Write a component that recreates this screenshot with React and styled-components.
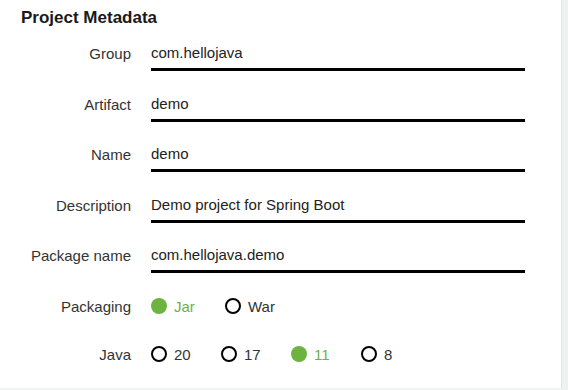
import React, { useState } from 'react'
import styled, { createGlobalStyle } from 'styled-components'

const GlobalStyle = createGlobalStyle`
  body {
    margin: 0;
    background: #eef3f2;
    font-family: 'Liberation Sans', Arial, sans-serif;
  }
`

const Panel = styled.div`
  width: 562px;
  height: 388px;
  background: #fff;
  border-right: 1px solid #dfe6e6;
  box-sizing: border-box;
  padding: 8px 0 0 21px;
`

const Title = styled.div`
  font-size: 17px;
  font-weight: bold;
  color: #1a1a1a;
  height: 20px;
  line-height: 20px;
`

const Form = styled.div`
  display: flex;
  flex-direction: column;
  margin-top: 9px;
`

const Row = styled.div`
  display: grid;
  grid-template-columns: 110px 1fr;
  column-gap: 20px;
  align-items: center;
  height: ${(p) => p.h || 50.5}px;
`

const Label = styled.label`
  text-align: right;
  font-size: 15px;
  color: #333;
  align-self: ${(p) => (p.top ? 'start' : 'center')};
  padding-top: ${(p) => (p.top ? '8px' : '0')};
`

const Input = styled.input`
  width: 374px;
  height: 34px;
  box-sizing: border-box;
  border: none;
  border-bottom: 3px solid #000;
  outline: none;
  padding: 0;
  font-family: inherit;
  font-size: 15px;
  color: #222;
  background: transparent;
  align-self: start;
`

const Radios = styled.div`
  display: flex;
  align-items: center;
`

const Radio = styled.div`
  display: flex;
  align-items: center;
  width: ${(p) => p.w}px;
  font-size: 15px;
  color: ${(p) => (p.on ? '#6db33f' : '#333')};
  cursor: pointer;
`

const Dot = styled.span`
  width: 16px;
  height: 16px;
  box-sizing: border-box;
  border-radius: 50%;
  margin-right: 7px;
  border: ${(p) => (p.on ? 'none' : '2px solid #000')};
  background: ${(p) => (p.on ? '#6db33f' : 'transparent')};
`

const fields = [
  ['Group', 'com.hellojava'],
  ['Artifact', 'demo'],
  ['Name', 'demo'],
  ['Description', 'Demo project for Spring Boot'],
  ['Package name', 'com.hellojava.demo'],
]

function RadioGroup({ options, value, onChange, w }) {
  return (
    <Radios>
      {options.map((o) => (
        <Radio key={o} w={w} on={o === value} onClick={() => onChange(o)}>
          <Dot on={o === value} />
          {o}
        </Radio>
      ))}
    </Radios>
  )
}

export default function App() {
  const [values, setValues] = useState(fields.map((f) => f[1]))
  const [packaging, setPackaging] = useState('Jar')
  const [java, setJava] = useState('11')
  return (
    <>
      <GlobalStyle />
      <Panel>
        <Title>Project Metadata</Title>
        <Form>
          {fields.map(([label], i) => (
            <Row key={label} h={i === fields.length - 1 ? 43 : 50.5}>
              <Label top>{label}</Label>
              <Input
                value={values[i]}
                onChange={(e) => {
                  const next = [...values]
                  next[i] = e.target.value
                  setValues(next)
                }}
              />
            </Row>
          ))}
          <Row h={48}>
            <Label>Packaging</Label>
            <RadioGroup options={['Jar', 'War']} value={packaging} onChange={setPackaging} w={74} />
          </Row>
          <Row h={48}>
            <Label>Java</Label>
            <RadioGroup options={['20', '17', '11', '8']} value={java} onChange={setJava} w={70} />
          </Row>
        </Form>
      </Panel>
    </>
  )
}
